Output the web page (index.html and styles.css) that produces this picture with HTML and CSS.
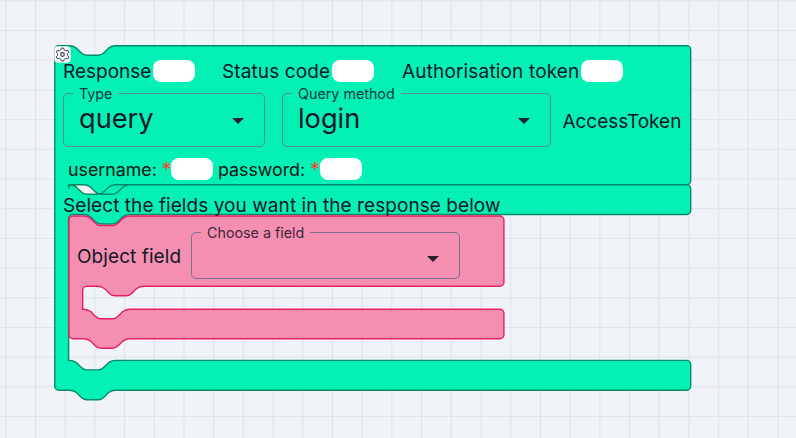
FILE: index.html
```html
<!DOCTYPE html>
<html lang="en">
<head>
<meta charset="utf-8">
<title>Block workspace</title>
<link rel="stylesheet" href="styles.css">
</head>
<body>
<main class="workspace">
  <svg class="shapes" width="796" height="438" viewBox="0 0 796 438">
    <defs>
      <pattern id="grid" x="5.3" y="0.3" width="29.7" height="29.7" patternUnits="userSpaceOnUse">
        <path d="M0 .5H29.7M.5 0V29.7" stroke="#dfe2e6" fill="none"/>
      </pattern>
    </defs>
    <rect width="796" height="438" fill="url(#grid)"/>
    <path class="request-shape" d="M54.8 49.8a4 4 0 0 1 4-4H69.400c3.6 0 5.300 1.200 7.100 2.400l4.300 4.300c1.800 1.800 3.600 2.800 6 2.800h11.400c2.400 0 4.200-1 6-2.800l4.300-4.300c1.800-1.200 3.500-2.400 7.100-2.400H686.700a4 4 0 0 1 4 4V180.800a4 4 0 0 1-4 4H129.800c-3.6 0-5.300 1.200-7.100 2.400l-4.300 4.300c-1.800 1.800-3.600 2.800-6 2.800h-11.400c-2.400 0-4.200-1-6-2.800l-4.300-4.300c-1.800-1.200-3.500-2.400-7.100-2.400H72.600a4 4 0 0 0-4 4V184.800H69.400c3.6 0 5.300 1.200 7.100 2.400l4.300 4.300c1.800 1.800 3.600 2.800 6 2.800h11.400c2.400 0 4.200-1 6-2.800l4.300-4.300c1.800-1.200 3.500-2.400 7.100-2.400H686.700a4 4 0 0 1 4 4V210.500a4 4 0 0 1-4 4H129.800c-3.6 0-5.300 1.200-7.100 2.400l-4.300 4.300c-1.800 1.800-3.600 2.800-6 2.800h-11.400c-2.400 0-4.200-1-6-2.800l-4.300-4.300c-1.800-1.200-3.500-2.400-7.100-2.400H72.600a4 4 0 0 0-4 4V360.400H69.400c3.6 0 5.300 1.200 7.100 2.400l4.300 4.300c1.800 1.800 3.600 2.800 6 2.800h11.400c2.400 0 4.200-1 6-2.800l4.300-4.300c1.800-1.200 3.500-2.400 7.100-2.400H686.700a4 4 0 0 1 4 4V386.200a4 4 0 0 1-4 4H115.600c-3.6 0-5.300 1.200-7.100 2.400l-4.300 4.300c-1.800 1.800-3.600 2.800-6 2.800h-11.400c-2.400 0-4.200-1-6-2.800l-4.300-4.300c-1.800-1.200-3.500-2.400-7.100-2.400H58.800a4 4 0 0 1-4-4Z"/>
    <path class="field-shape" d="M69 220a4 4 0 0 1 4-4H83.600c3.6 0 5.300 1.200 7.100 2.400l4.300 4.300c1.800 1.800 3.600 2.800 6 2.800h11.400c2.400 0 4.200-1 6-2.800l4.300-4.300c1.800-1.200 3.500-2.400 7.100-2.400H499.900a4 4 0 0 1 4 4V282.200a4 4 0 0 1-4 4H143.700c-3.6 0-5.300 1.200-7.100 2.400l-4.300 4.300c-1.800 1.800-3.600 2.800-6 2.800h-11.400c-2.400 0-4.200-1-6-2.800l-4.300-4.300c-1.800-1.200-3.500-2.400-7.100-2.400H86.700a4 4 0 0 0-4 4V309.200H83.600c3.6 0 5.300 1.200 7.100 2.400l4.300 4.300c1.800 1.800 3.600 2.800 6 2.800h11.400c2.400 0 4.200-1 6-2.800l4.300-4.300c1.800-1.200 3.500-2.400 7.100-2.400H499.900a4 4 0 0 1 4 4V334.800a4 4 0 0 1-4 4H129.800c-3.6 0-5.300 1.200-7.100 2.400l-4.300 4.300c-1.800 1.800-3.600 2.800-6 2.800h-11.400c-2.400 0-4.200-1-6-2.800l-4.300-4.300c-1.800-1.200-3.500-2.400-7.100-2.400H73a4 4 0 0 1-4-4Z"/>
  </svg>

  <svg class="gear" width="17" height="17" viewBox="0 0 17 17">
    <rect x=".3" y=".3" width="16.4" height="16.4" rx="4" fill="#fff"/>
    <path d="M7.300 2.100h2.400l.5 1.800 1.500.9 1.900-.6 1.200 2.100-1.400 1.400v1.700l1.400 1.400-1.200 2.100-1.900-.6-1.500.9-.5 1.800H7.300l-.5-1.800-1.500-.9-1.900.6-1.200-2.100 1.400-1.400V7.700L2.200 6.300l1.200-2.100 1.900.6 1.500-.9z" fill="none" stroke="#333b48"/>
    <circle cx="8.500" cy="8.500" r="1.800" fill="none" stroke="#333b48" stroke-width="1.200"/>
  </svg>

  <section class="request">
    <div class="row outputs">
      <span class="output response"><span class="label">Response</span><i class="pill"></i></span>
      <span class="output status"><span class="label">Status code</span><i class="pill"></i></span>
      <span class="output token"><span class="label">Authorisation token</span><i class="pill"></i></span>
    </div>
    <div class="row selectors">
      <div class="select type"><span class="caption">Type</span><span class="value">query</span><i class="arrow"></i></div>
      <div class="select method"><span class="caption">Query method</span><span class="value">login</span><i class="arrow"></i></div>
      <span class="result">AccessToken</span>
    </div>
    <div class="row arguments">
      <span class="argument username"><span class="label">username: <b>*</b></span><i class="pill"></i></span>
      <span class="argument password"><span class="label">password: <b>*</b></span><i class="pill"></i></span>
    </div>
    <div class="row hint">Select the fields you want in the response below</div>
    <div class="row field">
      <span class="field-name">Object field</span>
      <div class="select choose"><span class="caption">Choose a field</span><i class="arrow"></i></div>
    </div>
  </section>
</main>
</body>
</html>
```

FILE: styles.css
```css
* { box-sizing: border-box; }
body { margin: 0; background: #f0f3f8; font-family: Inter, sans-serif; font-size: 19px; line-height: 24px; color: #111827; }
.workspace { position: relative; width: 796px; height: 438px; overflow: hidden; }
.shapes { position: absolute; left: 0; top: 0; }
.request-shape { fill: #05f0b4; stroke: #058a68; stroke-width: 1.4; }
.field-shape { fill: #f48fb1; stroke: #e91e63; stroke-width: 1.4; }
.gear { position: absolute; left: 54px; top: 46px; }
.request { position: relative; width: 636px; margin-left: 63px; padding-top: 59px; }
.row { display: flex; white-space: nowrap; }
.outputs { height: 24px; letter-spacing: .16px; }
.output, .argument { display: flex; flex: none; align-items: center; }
.label { padding-top: 2px; }
.response { width: 159px; letter-spacing: 0; }
.status { width: 180px; letter-spacing: .12px; }
.pill { flex: none; width: 42px; height: 22px; margin-left: auto; border-radius: 8px; background: #fff; }
.response .pill { margin-right: 27px; }
.status .pill { margin-right: 28px; }
.token { width: 221px; }
.selectors { height: 54px; margin-top: 10px; }
.select { position: relative; display: flex; flex: none; align-items: center; height: 54px; padding: 0 20px 0 15px; border: 1px solid #578f88; border-radius: 5px; }
.type { width: 202px; }
.method { width: 269.4px; margin-left: 17px; }
.caption { position: absolute; left: 9px; top: -9px; padding: 0 6px; background: #05f0b4; color: #153b3d; font-size: 14.3px; line-height: 18px; }
.value { font-size: 27.2px; line-height: 34px; margin-top: -3px; }
.arrow { margin: 1px 0 0 auto; border: 6.5px solid transparent; border-top-color: #26202f; border-bottom: 0; }
.result { margin: 17px 0 0 11px; }
.arguments { height: 24px; margin: 10px 0 0 5px; color: #0b1512; font-size: 17.8px; }
.username { width: 144px; margin-right: 6px; }
.password { width: 143px; }
.argument b { color: #f44336; font-size: 19px; line-height: 20px; font-weight: 400; }
.username .pill, .password .pill { margin-left: 0; }
.hint { height: 24px; margin-top: 13px; letter-spacing: .065px; }
.field { margin: 14px 0 0 14px; }
.field-name { margin-top: 13px; width: 114px; letter-spacing: .08px; }
.choose { width: 269.4px; height: 47px; padding-top: 6px; border-color: #79718e; }
.choose .caption { background: #f48fb1; color: #43263a; }
```
